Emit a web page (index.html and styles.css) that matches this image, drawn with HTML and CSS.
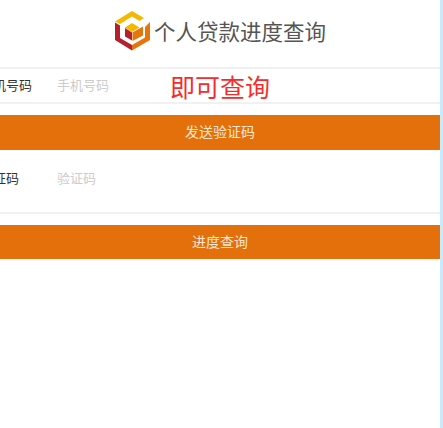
FILE: index.html
```html
<!DOCTYPE html>
<html lang="zh-CN">
<head>
<meta charset="utf-8">
<title>个人贷款进度查询</title>
<link rel="stylesheet" href="styles.css">
</head>
<body>
<main class="page">
  <header class="brand">
    <svg class="logo" viewBox="0 0 35 40" aria-hidden="true">
      <polygon fill="#f5b800" points="0,10.5 17,0 29,7 24.5,10 17,5.5 5,13"/>
      <polygon fill="#b5202c" points="0,11.5 5,14.5 5,27 17,34 17,39.5 0,29"/>
      <polygon fill="#e8740c" points="17,39.5 17,34 30,26.5 30,16 35,11 35,29"/>
      <polygon fill="#f5b800" points="17,12 24.5,16.5 17,21 10,16.5"/>
      <polygon fill="#b5202c" points="10,17 17,21.5 17,29.5 10,25.5"/>
      <polygon fill="#e8740c" points="17.5,21.5 28,15.5 28,24.5 17.5,30"/>
    </svg>
    <h1 class="brand-title">个人贷款进度查询</h1>
  </header>
  <form class="form">
    <label class="field field-phone">
      <span class="field-label">手机号码</span>
      <input class="field-input" type="text" placeholder="手机号码">
    </label>
    <button class="action action-send" type="button">发送验证码</button>
    <label class="field field-code">
      <span class="field-label">验证码</span>
      <input class="field-input" type="text" placeholder="验证码">
    </label>
    <button class="action action-query" type="button">进度查询</button>
    <p class="overlay-note">即可查询</p>
  </form>
</main>
<div class="edge"></div>
</body>
</html>
```
FILE: styles.css
```css
* { box-sizing: border-box; }
html, body { height: 100%; }
body {
  margin: 0;
  display: flex;
  overflow: hidden;
  background: #fff;
  font-family: "Noto Sans CJK SC", "Liberation Sans", sans-serif;
}
.page { width: 440px; flex: none; overflow: hidden; }
.edge { flex: 1; background: #c9e9fc; }
.brand {
  height: 67px;
  padding: 11px 0 0 115px;
  display: flex;
  align-items: flex-start;
  gap: 4px;
}
.logo { width: 35px; height: 40px; flex: none; }
.brand-title {
  margin: 7px 0 0;
  font-size: 21.5px;
  line-height: 26px;
  font-weight: 400;
  color: #555;
  white-space: nowrap;
}
.form { position: relative; }
.field {
  display: flex;
  align-items: center;
  margin-left: -20px;
  font-size: 13px;
  color: #333;
}
.field-phone {
  height: 37px;
  padding-bottom: 3px;
  border-top: 2px solid #f1f1f1;
  border-bottom: 2px solid #f1f1f1;
}
.field-code {
  height: 64px;
  padding-bottom: 7px;
  border-bottom: 2px solid #f1f1f1;
}
.field-label { width: 77px; flex: none; }
.field-input {
  flex: 1;
  min-width: 0;
  padding: 0;
  border: 0;
  outline: 0;
  background: transparent;
  font: inherit;
  color: #333;
}
.field-input::placeholder { color: #ccc; opacity: 1; }
.action {
  display: block;
  width: 100%;
  padding: 0 0 3px;
  border: 0;
  background: #e3700a;
  color: #fbe6d2;
  font: inherit;
  font-size: 14px;
}
.action-send { height: 35px; margin-top: 11px; }
.action-query { height: 34px; margin-top: 11px; }
.overlay-note {
  position: absolute;
  left: 170px;
  top: 1px;
  margin: 0;
  font-size: 25px;
  line-height: 36px;
  color: #f62c2c;
}
```
